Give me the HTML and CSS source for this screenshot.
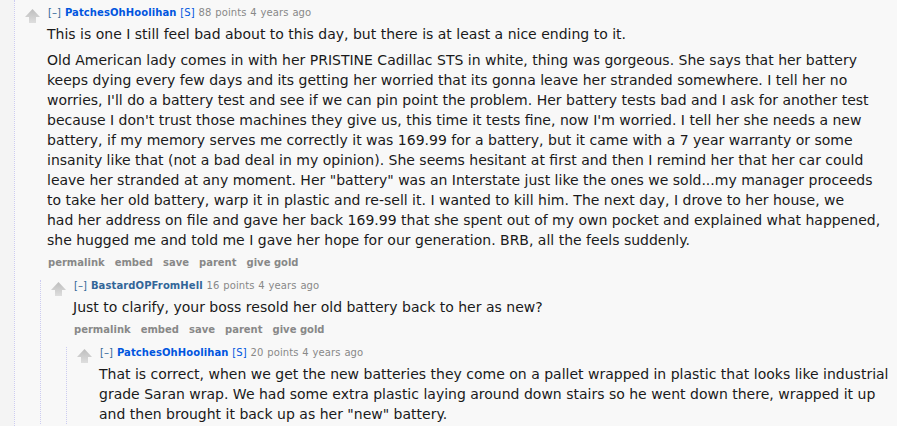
FILE: index.html
```html
<!DOCTYPE html>
<html>
<head>
<meta charset="utf-8">
<link rel="stylesheet" href="styles.css">
</head>
<body>
<div class="thread">
  <div class="comment">
    <div class="main">
      <div class="midcol">
        <svg class="arrow" width="15" height="14" viewBox="0 0 15 14"><defs><linearGradient id="g1" x1="0" y1="0" x2="0" y2="1"><stop offset="0" stop-color="#bdbdbd"/><stop offset="1" stop-color="#dedede"/></linearGradient></defs><path d="M7.5 0 L15 8 L11 8 L11 14 L4 14 L4 8 L0 8 Z" fill="url(#g1)"/></svg>
      </div>
      <div class="entry">
        <p class="tagline"><span class="expand">[–]</span> <a class="author submitter">PatchesOhHoolihan</a> <span class="flair">[S]</span> <span class="score">88 points 4 years ago</span></p>
        <div class="md">
          <p>This is one I still feel bad about to this day, but there is at least a nice ending to it.</p>
          <p>Old American lady comes in with her PRISTINE Cadillac STS in white, thing was gorgeous. She says that her battery keeps dying every few days and its getting her worried that its gonna leave her stranded somewhere. I tell her no worries, I'll do a battery test and see if we can pin point the problem. Her battery tests bad and I ask for another test because I don't trust those machines they give us, this time it tests fine, now I'm worried. I tell her she needs a new battery, if my memory serves me correctly it was 169.99 for a battery, but it came with a 7 year warranty or some insanity like that (not a bad deal in my opinion). She seems hesitant at first and then I remind her that her car could leave her stranded at any moment. Her "battery" was an Interstate just like the ones we sold...my manager proceeds to&nbsp;take her old battery, warp it in plastic and re-sell it. I wanted to kill him. The next day, I drove to her house, we had&nbsp;her address on file and gave her back 169.99 that she spent out of my own pocket and explained what happened, she hugged me and told me I gave her hope for our generation. BRB, all the feels suddenly.</p>
        </div>
        <ul class="buttons"><li>permalink</li><li>embed</li><li>save</li><li>parent</li><li>give gold</li></ul>
      </div>
    </div>
    <div class="child">
      <div class="comment">
        <div class="main">
          <div class="midcol">
            <svg class="arrow" width="15" height="14" viewBox="0 0 15 14"><defs><linearGradient id="g2" x1="0" y1="0" x2="0" y2="1"><stop offset="0" stop-color="#bdbdbd"/><stop offset="1" stop-color="#dedede"/></linearGradient></defs><path d="M7.5 0 L15 8 L11 8 L11 14 L4 14 L4 8 L0 8 Z" fill="url(#g2)"/></svg>
          </div>
          <div class="entry">
            <p class="tagline"><span class="expand">[–]</span> <a class="author">BastardOPFromHell</a> <span class="score">16 points 4 years ago</span></p>
            <div class="md">
              <p>Just to clarify, your boss resold her old battery back to her as new?</p>
            </div>
            <ul class="buttons"><li>permalink</li><li>embed</li><li>save</li><li>parent</li><li>give gold</li></ul>
          </div>
        </div>
        <div class="child">
          <div class="comment">
            <div class="main">
              <div class="midcol">
                <svg class="arrow" width="15" height="14" viewBox="0 0 15 14"><defs><linearGradient id="g3" x1="0" y1="0" x2="0" y2="1"><stop offset="0" stop-color="#bdbdbd"/><stop offset="1" stop-color="#dedede"/></linearGradient></defs><path d="M7.5 0 L15 8 L11 8 L11 14 L4 14 L4 8 L0 8 Z" fill="url(#g3)"/></svg>
              </div>
              <div class="entry">
                <p class="tagline"><span class="expand">[–]</span> <a class="author submitter">PatchesOhHoolihan</a> <span class="flair">[S]</span> <span class="score">20 points 4 years ago</span></p>
                <div class="md">
                  <p>That is correct, when we get the new batteries they come on a pallet wrapped in plastic that looks like industrial grade Saran wrap. We had some extra plastic laying around down stairs so he went down there, wrapped it up and then brought it back up as her "new" battery.</p>
                </div>
              </div>
            </div>
          </div>
        </div>
      </div>
    </div>
  </div>
</div>
</body>
</html>
```

FILE: styles.css
```css
html, body {
  margin: 0;
  padding: 0;
  height: 100%;
  overflow: hidden;
}
body {
  background: #f4f4f4;
  font-family: "DejaVu Sans", Verdana, sans-serif;
  color: #222;
}
.thread {
  margin-left: 14px;
  border-left: 1px dotted #ccccf0;
  background: #f8f8f8;
  min-height: 100%;
  padding-top: 7px;
  box-sizing: border-box;
}
.main {
  display: flex;
}
.midcol {
  width: 15px;
  margin: 2px 7px 0 10px;
  flex: none;
}
.arrow {
  display: block;
}
.entry {
  flex: 1;
  min-width: 0;
  padding-right: 4px;
}
.tagline {
  margin: 0;
  font-size: 10px;
  line-height: 12px;
  color: #888;
  padding-left: 1px;
  word-spacing: 0.5px;
  letter-spacing: 0.1px;
}
.expand {
  color: #369;
}
.author {
  font-weight: bold;
  color: #369;
}
.author.submitter {
  color: #0055df;
}
.flair {
  color: #0055df;
}
.md {
  margin-top: 5px;
  max-width: 838px;
  font-size: 14px;
  line-height: 20px;
  color: #1a1a1a;
}
.md p {
  margin: 0 0 6px 0;
}
.md p:last-child {
  margin-bottom: 0;
}
.buttons {
  list-style: none;
  margin: 7px 0 0 0;
  padding: 0 0 0 1px;
  display: flex;
  gap: 10px;
  font-size: 10px;
  line-height: 12px;
  font-weight: bold;
  color: #888;
}
.child {
  margin-top: 11px;
  margin-left: 25px;
  border-left: 1px dotted #ccccf0;
}
```
